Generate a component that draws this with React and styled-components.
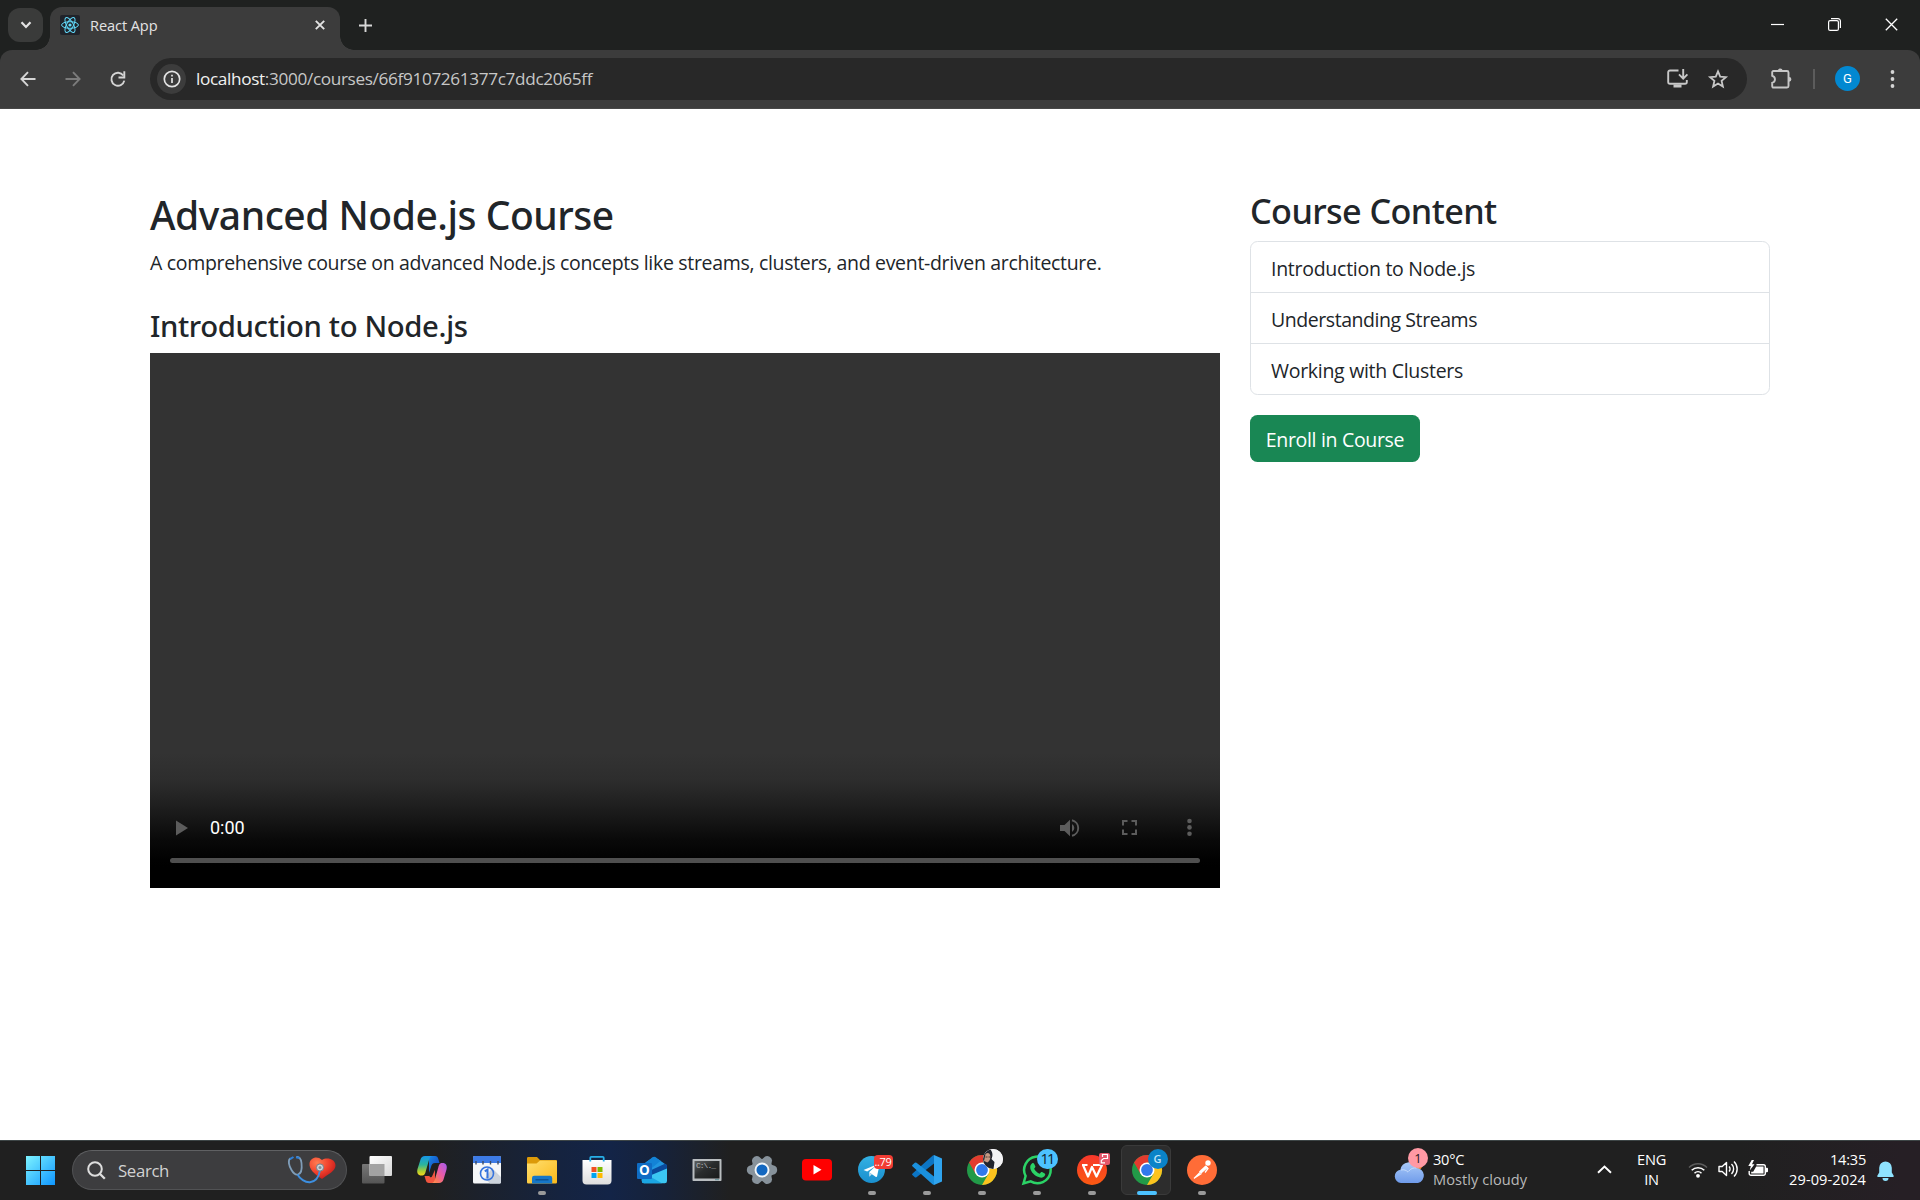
import React from "react";
import styled, { createGlobalStyle, css } from "styled-components";

const ui = `"Open Sans", "Noto Sans", sans-serif`;
const heading = `"Noto Sans", "Open Sans", sans-serif`;

const GlobalStyle = createGlobalStyle`
  *, *::before, *::after { box-sizing: border-box; }
  body { margin: 0; background: #fff; font-family: ${ui}; color: #212529; overflow: hidden; }
  h1, h2, h3, p, ul { margin: 0; padding: 0; }
  svg { display: block; flex: none; overflow: visible; }
`;

const Screen = styled.div`
  display: flex;
  flex-direction: column;
  width: 1920px;
  height: 1200px;
`;

/* ---------- browser chrome ---------- */

const Browser = styled.header`
  flex: none;
  height: 109px;
  background: #1f2120;
`;

const TabStrip = styled.div`
  display: flex;
  height: 50px;
  padding: 8px 22px 0 8px;
`;

const TabSearch = styled.div`
  display: flex;
  align-items: center;
  justify-content: center;
  width: 35px;
  height: 34px;
  border-radius: 12px;
  background: #3a3b3a;
`;

const Tab = styled.div`
  position: relative;
  display: flex;
  align-items: center;
  width: 290px;
  height: 43px;
  margin: -1px 0 0 7px;
  padding: 0 15px 7px 10px;
  border-radius: 12px 12px 0 0;
  background: #3c3c3c;

  &::before, &::after {
    content: "";
    position: absolute;
    bottom: 0;
    width: 14px;
    height: 14px;
  }
  &::before {
    left: -14px;
    background: radial-gradient(circle at 0 0, transparent 13.5px, #3c3c3c 14px);
  }
  &::after {
    right: -14px;
    background: radial-gradient(circle at 100% 0, transparent 13.5px, #3c3c3c 14px);
  }
`;

const Favicon = styled.div`
  display: flex;
  align-items: center;
  justify-content: center;
  width: 20px;
  height: 20px;
  margin-top: -1px;
  border-radius: 2px;
  background: #20232a;
`;

const TabTitle = styled.span`
  flex: 1;
  margin: 0 0 1px 10px;
  color: #e3e3e3;
  font-size: 14.6px;
  line-height: 20px;
  letter-spacing: -0.1px;
`;

const NewTab = styled.div`
  display: flex;
  width: 14px;
  height: 34px;
  margin-left: 19px;
  align-items: center;
`;

const WindowControls = styled.div`
  display: flex;
  gap: 44px;
  margin-left: auto;
  height: 33px;
  align-items: center;
`;

const Toolbar = styled.div`
  display: flex;
  align-items: center;
  height: 59px;
  padding: 0 20px 1px 20px;
  border-radius: 12px 12px 0 0;
  border-bottom: 1px solid #474747;
  background: #3c3c3c;
`;

const NavButtons = styled.div`
  display: flex;
  flex: none;
  gap: 29px;
  width: 130px;
`;

const Omnibox = styled.div`
  display: flex;
  flex: none;
  align-items: center;
  width: 1597px;
  height: 42px;
  padding: 0 19px 0 7px;
  border-radius: 21px;
  background: #282828;
`;

const SiteInfo = styled.div`
  display: flex;
  align-items: center;
  justify-content: center;
  width: 29px;
  height: 30px;
  border-radius: 50%;
  background: #3c3c3c;
`;

const Url = styled.div`
  flex: 1;
  margin: 1px 0 0 10px;
  color: #c7c7c7;
  font-size: 17.2px;
  line-height: 24px;
  letter-spacing: -0.35px;
`;

const Host = styled.span`
  color: #f1f1f1;
`;

const OmniboxActions = styled.div`
  display: flex;
  align-items: center;
  gap: 20px;
`;

const ToolbarEnd = styled.div`
  display: flex;
  align-items: center;
  margin-left: 24px;
`;

const Divider = styled.div`
  width: 2px;
  height: 20px;
  margin: 0 20px 0 21px;
  background: #5c5c5c;
`;

const Avatar = styled.div`
  display: flex;
  align-items: center;
  justify-content: center;
  width: 25px;
  height: 25px;
  margin-right: 30px;
  border-radius: 50%;
  background: #0288d1;
  color: #fff;
  font: 400 13px/25px Roboto, sans-serif;
`;

/* ---------- course page ---------- */

const Page = styled.main`
  display: flex;
  gap: 30px;
  flex: 1;
  padding: 80px 150px 0;
  align-items: flex-start;
`;

const Lesson = styled.section`
  width: 1070px;
`;

const headingBase = css`
  font-family: ${heading};
  font-weight: 500;
  white-space: nowrap;
`;

const CourseTitle = styled.h1`
  ${headingBase}
  height: 48px;
  margin-bottom: 10px;
  font-size: 39px;
  line-height: 51px;
  letter-spacing: -0.48px;
`;

const Description = styled.p`
  height: 30px;
  margin-bottom: 30px;
  font-size: 19.5px;
  line-height: 32px;
  letter-spacing: -0.315px;
  white-space: nowrap;
`;

const LessonTitle = styled.h3`
  ${headingBase}
  height: 36px;
  margin-bottom: 10px;
  font-size: 29.3px;
  line-height: 39px;
  letter-spacing: -0.37px;
`;

const Player = styled.div`
  display: flex;
  flex-direction: column;
  justify-content: flex-end;
  height: 535px;
  padding-bottom: 25px;
  background: linear-gradient(
    to bottom,
    #333 400px, #2d2d2d 427px, #222 447px, #161616 467px,
    #090909 487px, #010101 507px, #000 515px
  );
`;

const Controls = styled.div`
  display: flex;
  align-items: center;
  height: 60px;
  padding-right: 1px;
`;

const ControlButton = styled.div`
  display: flex;
  align-items: center;
  justify-content: center;
  width: 60px;
  height: 59px;
  margin-bottom: 1px;
  color: #5c5c5c;
`;

const Time = styled.span`
  flex: 1;
  color: #fff;
  font: 400 18px/24px Roboto, sans-serif;
`;

const Track = styled.div`
  height: 5px;
  margin: 0 20px;
  border-radius: 3px;
  background: #4f4f4f;
`;

const Sidebar = styled.aside`
  width: 520px;
`;

const SidebarTitle = styled.h2`
  ${headingBase}
  height: 42px;
  margin-bottom: 10px;
  font-size: 34.2px;
  line-height: 44px;
  letter-spacing: -0.6px;
`;

const LessonList = styled.ul`
  list-style: none;
  border: 1px solid #dee2e6;
  border-radius: 7.5px;
  margin-bottom: 20px;
`;

const LessonItem = styled.li`
  height: 51px;
  padding: 11px 20px 0;
  font-size: 19.5px;
  line-height: 31px;
  letter-spacing: ${(p) => p.$tracking}px;

  & + & {
    border-top: 1px solid #dee2e6;
  }
  &:first-child {
    height: 50px;
  }
`;

const EnrollButton = styled.button`
  display: block;
  width: 170px;
  height: 47px;
  padding: 2px 0 0;
  border: 0;
  border-radius: 7.5px;
  background: #198754;
  color: #fff;
  font: 400 19.5px/31px ${ui};
  letter-spacing: -0.32px;
`;

/* ---------- taskbar ---------- */

const Taskbar = styled.footer`
  display: flex;
  flex: none;
  height: 60px;
  border-top: 1px solid #3d4546;
  background: linear-gradient(
    to right,
    #202020 0, #202020 430px, #15233f 560px, #132447 610px,
    #172238 665px, #202020 730px, #202020 1740px, #261f25 1900px
  );
`;

const Start = styled.div`
  display: flex;
  align-items: center;
  padding: 0 17px 0 26px;
`;

const SearchBox = styled.div`
  display: flex;
  align-items: center;
  width: 275px;
  height: 40px;
  margin-top: 9px;
  padding: 0 10px 0 14px;
  border: 1px solid #515254;
  border-top-color: #606163;
  border-radius: 20px;
  background: #3d3d3f;
`;

const SearchLabel = styled.span`
  flex: 1;
  margin: 1px 0 0 12px;
  color: #d2d2d2;
  font-size: 16.8px;
  line-height: 24px;
  letter-spacing: -0.35px;
`;

const Apps = styled.div`
  display: flex;
  padding-left: 2px;
`;

const AppCell = styled.div`
  position: relative;
  display: flex;
  justify-content: center;
  width: 55px;
  height: 59px;
  padding-top: 14px;
`;

const ActiveTile = styled.div`
  position: absolute;
  inset: 4px 3px 5px 2px;
  border: 1px solid #3a3a3a;
  border-radius: 6px;
  background: #2d2d2d;
`;

const Glyph = styled.div`
  position: relative;
  width: 30px;
  height: 30px;
`;

const Indicator = styled.div`
  position: absolute;
  bottom: 5px;
  left: 50%;
  width: ${(p) => (p.$active ? 20 : 8)}px;
  height: 4px;
  margin-left: ${(p) => (p.$active ? -10 : -4)}px;
  border-radius: 2px;
  background: ${(p) => (p.$active ? "#4cc2ff" : "#9a9a9a")};
`;

const Badge = styled.span`
  position: absolute;
  top: ${(p) => p.$top}px;
  left: ${(p) => p.$left}px;
  width: ${(p) => p.$w}px;
  height: ${(p) => p.$h}px;
  border-radius: ${(p) => p.$r ?? p.$h / 2}px;
  background: ${(p) => p.$bg};
  color: ${(p) => p.$fg};
  font: ${(p) => p.$weight ?? 400} ${(p) => p.$size}px/${(p) => p.$h}px ${ui};
  letter-spacing: ${(p) => p.$tracking ?? 0}px;
  text-align: center;
`;

const Tray = styled.div`
  display: flex;
  margin-left: auto;
`;

const Weather = styled.div`
  display: flex;
  width: 203px;
`;

const WeatherIcon = styled.div`
  position: relative;
  width: 39px;
  padding-top: 16px;
`;

const Lines = styled.div`
  display: flex;
  flex-direction: column;
  padding-top: 8px;
  color: #fff;
  font-size: 14.6px;
  line-height: 20px;
  letter-spacing: ${(p) => p.$tracking ?? 0}px;
  text-align: ${(p) => p.$align ?? "left"};
  white-space: nowrap;
`;

const Muted = styled.span`
  color: #b9b9b9;
  letter-spacing: 0.04px;
`;

const Tight = styled.span`
  letter-spacing: -0.24px;
`;

const Chevron = styled.div`
  width: 40px;
  padding-top: 24px;
`;

const Language = styled.div`
  width: 51px;
  padding-right: 22px;
`;

const Status = styled.div`
  display: flex;
  gap: 10px;
  width: 101px;
  padding-top: 19px;
`;

const Clock = styled.div`
  width: 77px;
`;

const Bell = styled.div`
  width: 54px;
  padding: 20px 0 0 11px;
`;

/* ---------- icons ---------- */

const line = (color, width) => ({ fill: "none", stroke: color, strokeWidth: width });

const ChevronDown = () => (
  <svg width="12" height="8" viewBox="0 0 12 8"><path d="M1.500 1.200 6 6l4.500-4.800" {...line("#e3e3e3", 2.2)} /></svg>
);
const ReactMark = () => (
  <svg width="18" height="18" viewBox="-9 -9 18 18">
    <g {...line("#61dafb", 1)}>
      {[0, 60, 120].map((a) => <ellipse key={a} rx="8.4" ry="3.3" transform={`rotate(${a})`} />)}
    </g>
    <circle r="1.6" fill="#61dafb" />
  </svg>
);
const Cross = ({ size, width, color }) => (
  <svg width={size} height={size} viewBox={`0 0 ${size} ${size}`}>
    <path d={`M.8 .8 ${size - 0.8} ${size - 0.8}M${size - 0.8} .8 .8 ${size - 0.8}`} {...line(color, width)} />
  </svg>
);
const Plus = () => (
  <svg width="13" height="13" viewBox="0 0 13 13"><path d="M6.500 0v13M0 6.500h13" {...line("#d8d8d8", 1.9)} /></svg>
);
const Minimize = () => (
  <svg width="13" height="13" viewBox="0 0 13 13"><path d="M0 6.500h13" {...line("#fff", 1.2)} /></svg>
);
const Restore = () => (
  <svg width="13" height="13" viewBox="0 0 13 13">
    <rect x=".6" y="2.6" width="9.8" height="9.8" rx="1.5" {...line("#fff", 1.2)} />
    <path d="M3 .6h7a2.400 2.400 0 0 1 2.400 2.400v7" {...line("#fff", 1.2)} />
  </svg>
);
const Back = ({ color, flip }) => (
  <svg width="16" height="16" viewBox="0 0 16 16">
    <path transform={flip ? "matrix(-1 0 0 1 16 0)" : undefined} d="M15.500 8H1.700M8 1.200 1.400 8 8 14.800" {...line(color, 1.9)} />
  </svg>
);
const Reload = () => (
  <svg width="16" height="16" viewBox="0 0 16 16">
    <path d="M13.300 4.500A6.500 6.500 0 1 0 14.300 9.600" {...line("#d5d5d5", 1.9)} />
    <path d="M14.300.3v6.200H8.500" {...line("#d5d5d5", 1.9)} />
  </svg>
);
const Info = () => (
  <svg width="18" height="18" viewBox="0 0 18 18">
    <circle cx="9" cy="9" r="7.7" {...line("#e3e3e3", 1.7)} />
    <path d="M9 8v5M9 4.800v1.800" {...line("#e3e3e3", 1.7)} />
  </svg>
);
const Install = () => (
  <svg width="21" height="19" viewBox="0 0 21 19">
    <path d="M11.500 1.500H3A1.800 1.800 0 0 0 1.200 3.300v9.600A1.800 1.800 0 0 0 3 14.700h15a1.800 1.800 0 0 0 1.800-1.800V11" {...line("#c7c7c7", 1.9)} />
    <path d="M16.200 0v9M12 5.400l4.200 4.200 4.200-4.200" {...line("#c7c7c7", 1.9)} />
    <path d="M6.500 15.500h8v3h-8z" fill="#c7c7c7" />
  </svg>
);
const Star = () => (
  <svg width="20" height="20" viewBox="0 0 20 20">
    <path d="m10 2.400 2.200 5.300 5.700.5-4.300 3.700 1.300 5.600L10 14.500l-4.900 3 1.300-5.600L2.100 8.200l5.700-.5z" {...line("#c7c7c7", 1.8)} />
  </svg>
);
const Puzzle = () => (
  <svg width="21" height="21" viewBox="0 0 21 21">
    <path d="M2.500 3H16a1.500 1.500 0 0 1 1.500 1.500V18a1.500 1.500 0 0 1-1.500 1.500H2.500A1.200 1.200 0 0 1 1.200 18.300V14.800a3.600 3.600 0 0 0 0-7V4.300A1.200 1.200 0 0 1 2.500 3z" {...line("#c7c7c7", 1.9)} />
    <path d="M6.800 2.800a2.400 2.400 0 0 1 4.800 0zM18 8.900a2.400 2.400 0 0 1 0 4.800z" fill="#c7c7c7" />
  </svg>
);
const Dots = ({ color, r, step }) => (
  <svg width="5" height={step * 2 + 4} viewBox={`-2.500 ${-step - 2} 5 ${step * 2 + 4}`}>
    {[-step, 0, step].map((y) => <circle key={y} cy={y} r={r} fill={color} />)}
  </svg>
);
const Play = () => (
  <svg width="12" height="16" viewBox="0 0 12 16"><path d="M2 .5v15L14 8z" fill="currentColor" /></svg>
);
const Volume = () => (
  <svg width="19" height="18" viewBox="0 0 19 18">
    <path d="M0 6h4.500L10 .7v16.600L4.500 12H0zM12 5a4.600 4.600 0 0 1 0 8z" fill="currentColor" />
    <path d="M12 1.200a8 8 0 0 1 0 15.600" {...line("currentColor", 1.9)} />
  </svg>
);
const Fullscreen = () => (
  <svg width="15" height="15" viewBox="0 0 15 15">
    <path d="M1 5.500V1h4.500M9.500 1H14v4.500M14 9.500V14H9.500M5.500 14H1V9.500" {...line("currentColor", 2)} />
  </svg>
);

const WindowsLogo = () => (
  <svg width="29" height="29" viewBox="0 0 29 29">
    <defs><linearGradient id="win" x1="0" y1="0" x2="29" y2="29" gradientUnits="userSpaceOnUse">
      <stop stopColor="#7df3ff" /><stop offset="1" stopColor="#0f96ff" /></linearGradient></defs>
    <path d="M0 0h14v14H0zM15 0h14v14H15zM0 15h14v14H0zM15 15h14v14H15z" fill="url(#win)" />
  </svg>
);
const SearchGlyph = () => (
  <svg width="19" height="19" viewBox="0 0 19 19">
    <circle cx="8" cy="8" r="6.8" {...line("#dedede", 2)} /><path d="m12.800 12.800 5 5" {...line("#dedede", 2.3)} />
  </svg>
);
const Stethoscope = () => (
  <svg width="48" height="28" viewBox="0 0 48 28">
    <defs><radialGradient id="heart" cx=".3" cy=".25" r=".9">
      <stop stopColor="#ff7d52" /><stop offset=".5" stopColor="#f0402c" /><stop offset="1" stopColor="#b71218" /></radialGradient></defs>
    <path d="M34 23C26 18 21 13 21.500 7.500 22 2 29-1 34 4c5-3 13-1 13.500 5C48 15 40 18 34 23z" fill="url(#heart)" />
    <path d="M2.500 2.200C-.5 4 1 10 3.500 14c2 3.500 4.500 5 6.500 4.500 3.500-1 4-7 3.500-11.500C13 2.500 11 .5 8.500 1" {...line("#7f9db8", 1.8)} />
    <path d="M9.500 18.500C12 23 17 26.500 22 26.200c6-.4 9-6 10-12" {...line("#3d8fe0", 1.9)} />
    <path d="M2 3.200 5.500 1M8 1.200 11.500 2" {...line("#2d7fd8", 2)} />
    <circle cx="32" cy="11.5" r="3.6" fill="#ccd3d8" stroke="#75808a" /><circle cx="32" cy="11.5" r="1.5" fill="#858f97" />
  </svg>
);
const TaskView = () => (
  <svg width="30" height="30" viewBox="0 0 30 30">
    <defs><linearGradient id="tv" x1="0" y1="0" x2="1" y2="1"><stop stopColor="#fff" /><stop offset="1" stopColor="#d8d8d8" /></linearGradient>
      <linearGradient id="tv2" x1="0" y1="0" x2="0" y2="1"><stop stopColor="#777" /><stop offset="1" stopColor="#555" /></linearGradient></defs>
    <rect x="0" y="9" width="22.5" height="19.5" rx="1" fill="url(#tv2)" />
    <rect x="7.5" y="1" width="22.5" height="20" rx="1" fill="url(#tv)" />
    <path d="M7.500 9h15v12h-15z" fill="#a3a3a3" />
  </svg>
);
const Copilot = () => (
  <svg width="30" height="30" viewBox="0 0 30 30">
    <defs>
      <linearGradient id="cpA" x1="0" y1="0" x2="0" y2="1"><stop stopColor="#1696e8" /><stop offset=".45" stopColor="#2bb59c" /><stop offset=".8" stopColor="#b6cf2e" /><stop offset="1" stopColor="#f5d51e" /></linearGradient>
      <linearGradient id="cpB" x1="1" y1="0" x2="0" y2="1"><stop stopColor="#a35bf0" /><stop offset=".45" stopColor="#e85ba8" /><stop offset=".8" stopColor="#fb7a55" /><stop offset="1" stopColor="#fba35a" /></linearGradient>
      <linearGradient id="cpC" x1="0" y1="0" x2="1" y2="1"><stop stopColor="#1a86e6" /><stop offset="1" stopColor="#1039b8" /></linearGradient>
    </defs>
    <path d="M12 1h6c2 0 2.800 1.200 3.300 3L22.500 8H18c-2.500 0-3.200 1.500-4 4L12 18z" fill="url(#cpC)" />
    <path d="M18 28h-6c-2 0-2.800-1.200-3.300-3L7.500 21H12c2.500 0 3.200-1.500 4-4l2-6z" fill="#f0553f" />
    <path d="M8 1h7.500c-2 0-2.800 1.600-3.500 4l-3.300 11.500C8 19 7.500 20.500 4.500 20.500 1 20.500-.5 18 .5 14L3.500 4.500C4.200 2.200 5.500 1 8 1z" fill="url(#cpA)" />
    <path d="M22 28h-7.500c2 0 2.800-1.600 3.500-4l3.300-11.500C22 10 22.500 8 25.500 8c3.500 0 5 2.500 4 6.500l-3 10C25.800 26.800 24.500 28 22 28z" fill="url(#cpB)" />
    <path d="M18.500 10.500 13.800 21" stroke="#202020" strokeWidth="2.6" strokeLinecap="round" />
  </svg>
);
const CalendarApp = () => (
  <svg width="30" height="30" viewBox="0 0 30 30">
    <rect x="1" y="1" width="28" height="27.5" rx="1.5" fill="#f4f6f8" />
    <path d="M20 13 28.900 22v5.500a1.300 1.300 0 0 1-1.300 1H18l-5-5z" fill="#ccd3dc" />
    <path d="M1 8V2.500A1.500 1.500 0 0 1 2.500 1h25A1.500 1.500 0 0 1 29 2.500V8z" fill="#3d7be6" />
    {[4, 11, 18.5, 26].map((x) => <path key={x} d={`M${x} 6v3.500`} stroke="#3c4a60" strokeWidth="1.4" />)}
    <circle cx="15" cy="18.5" r="6.5" {...line("#3573dd", 1.6)} />
    <path d="M12.800 16.300 15.500 14.500V23.500" {...line("#3573dd", 2)} />
  </svg>
);
const Explorer = () => (
  <svg width="30" height="30" viewBox="0 0 30 30">
    <defs><linearGradient id="fold" x1="0" y1="0" x2="1" y2="1"><stop stopColor="#ffdf70" /><stop offset="1" stopColor="#fbb919" /></linearGradient></defs>
    <path d="M0 3.300A1.300 1.300 0 0 1 1.300 2H10l3 3H28.500A1.300 1.300 0 0 1 30 6.300V14H0z" fill="#dc9a09" />
    <path d="M0 8.500h9.500L13 5.500H29a1 1 0 0 1 1 1V27.300a1.200 1.200 0 0 1-1.200 1.200H1.200A1.200 1.200 0 0 1 0 27.300z" fill="url(#fold)" />
    <path d="M5 28.500V23a2.200 2.200 0 0 1 2.200-2.200H23A2.200 2.200 0 0 1 25.200 23v5.500z" fill="#1677c8" />
    <path d="M8.500 24.800h13" stroke="#0b4f91" strokeWidth="1.3" />
  </svg>
);
const Store = () => (
  <svg width="30" height="30" viewBox="0 0 30 30">
    <defs><linearGradient id="st" x1="0" y1="0" x2="0" y2="1"><stop stopColor="#fff" /><stop offset="1" stopColor="#dedede" /></linearGradient></defs>
    <path d="M.500 5h29v20.500a4 4 0 0 1-4 4h-21a4 4 0 0 1-4-4z" fill="url(#st)" />
    <path d="M8.300 6.500V2.800A1 1 0 0 1 9.300 1.800H20.700a1 1 0 0 1 1 1V6.500" {...line("#27afe8", 1.8)} />
    <path d="M9.500 12h5v5h-5z" fill="#f25022" /><path d="M15.500 12h5v5h-5z" fill="#7fba00" />
    <path d="M9.500 18h5v5h-5z" fill="#00a4ef" /><path d="M15.500 18h5v5h-5z" fill="#ffb900" />
  </svg>
);
const OutlookLetter = styled.span`
  position: absolute;
  left: 0;
  top: 8px;
  width: 15.5px;
  height: 15.5px;
  border-radius: 1px;
  background: #0f6cc4;
  color: #fff;
  font: 700 13.5px/15px ${ui};
  text-align: center;
`;
const Outlook = () => (
  <>
    <svg width="30" height="30" viewBox="0 0 30 30">
      <path d="M5 10 16 2.200a2 2 0 0 1 2.200 0L29.500 10v5l-10 8-14.500-5z" fill="#2196e0" />
      <path d="M9 7.200 16 2.200a2 2 0 0 1 2.200 0l5.500 3.600L11 16z" fill="#1383d6" />
      <path d="M28 8.800 30 10v4L14 22l-4-5z" fill="#0a4a9c" />
      <path d="M30 13.500V26a2.300 2.300 0 0 1-2.300 2.300H7A2.300 2.300 0 0 1 4.800 26V24z" fill="#3bc7f3" />
      <path d="M4.800 22h9L25 28.300H7A2.300 2.300 0 0 1 4.800 26z" fill="#1ba6e4" />
    </svg>
    <OutlookLetter>O</OutlookLetter>
  </>
);
const Prompt = styled.span`
  position: absolute;
  left: 4.5px;
  top: 5px;
  color: #b7b7b7;
  font: 400 8px/12px "Liberation Mono", monospace;
  letter-spacing: -1px;
`;
const Terminal = () => (
  <>
    <svg width="30" height="30" viewBox="0 0 30 30">
      <defs><linearGradient id="cmd" x1="0" y1="0" x2="1" y2="1"><stop stopColor="#5c5f60" /><stop offset=".45" stopColor="#2a2c2d" /><stop offset="1" stopColor="#191a1a" /></linearGradient></defs>
      <rect x=".5" y="4" width="29" height="22" rx=".8" fill="#b9bdc0" />
      <rect x="2.5" y="6" width="25" height="17.5" fill="url(#cmd)" />
      <path d="M23 24.700h4" stroke="#5d8e95" />
    </svg>
    <Prompt>C:\._</Prompt>
  </>
);
const Settings = () => (
  <svg width="30" height="30" viewBox="-15 -15 30 30">
    <defs><linearGradient id="gear" x1="0" y1="-15" x2="0" y2="15" gradientUnits="userSpaceOnUse"><stop stopColor="#9aa5ae" /><stop offset="1" stopColor="#707c86" /></linearGradient></defs>
    <circle r="11" fill="url(#gear)" />
    {[0, 60, 120, 180, 240, 300].map((a) => (
      <path key={a} transform={`rotate(${a})`} d="M6-6.500 13.200-4Q15.200-2.800 15.200 0T13.200 4L6 6.500z" fill="#87929b" />
    ))}
    <circle r="6.5" fill="#1267c0" stroke="#f3f7fa" strokeWidth="1.9" />
  </svg>
);
const YouTube = () => (
  <svg width="30" height="30" viewBox="0 0 30 30">
    <rect x="0" y="4" width="30" height="21.5" rx="4" fill="#f00" /><path d="M11.500 10v9.500l8-4.700z" fill="#fff" />
  </svg>
);
const Telegram = () => (
  <svg width="30" height="30" viewBox="0 0 30 30">
    <defs><linearGradient id="tg" x1="0" y1="0" x2="0" y2="1"><stop stopColor="#33b1e3" /><stop offset="1" stopColor="#1a8fce" /></linearGradient></defs>
    <circle cx="14.5" cy="14.5" r="13.5" fill="url(#tg)" />
    <path d="m6.500 15 15-6.200c.8-.3 1.200 0 1 .9l-2.400 11.500c-.2.800-.8 1-1.500.5l-6.600-4.400 6.500-6-8.300 5.300z" fill="#fff" />
    <path d="m12 17.300.3 4.500 2.600-2.600z" fill="#c3dced" />
  </svg>
);
const VSCode = () => (
  <svg width="30" height="30" viewBox="0 0 30 30">
    <path d="M22 0v8.500L4.500 22.200a1.500 1.500 0 0 1-1.700 0L.6 20.300a1.200 1.200 0 0 1 0-1.900L20.500.8z" fill="#0c75c4" />
    <path d="M22 30v-8.500L4.500 7.800a1.500 1.500 0 0 0-1.700 0L.6 9.700a1.200 1.200 0 0 0 0 1.900l19.900 17.600z" fill="#1a90dd" />
    <path d="M22 0 30 3.500v23L22 30z" fill="#2fa4ef" />
  </svg>
);
const Chrome = () => (
  <svg width="30" height="30" viewBox="-15 -15 30 30">
    <circle r="15" fill="#229a48" />
    <path d="M0-7.500H13A15 15 0 0 1 0 15L6.500 3.750z" fill="#fcc31e" />
    <path d="M-6.500 3.750-13-7.500A15 15 0 0 1 13-7.500H0z" fill="#e33b2e" />
    <circle r="7.5" fill="#fff" /><circle r="5.9" fill="#3079ec" />
  </svg>
);
const ProfilePhoto = () => (
  <svg width="20" height="20" viewBox="0 0 20 20">
    <defs><clipPath id="pc"><circle cx="10" cy="10" r="10" /></clipPath></defs>
    <g clipPath="url(#pc)">
      <path d="M0 0h20v20H0z" fill="#f3f3f5" />
      <path d="M0 0h7c3 3 3 7 1.500 10l3 3-1 7H0z" fill="#22252e" />
      <path d="M2.500 5C5 3 7 4.500 7.300 7c.3 3-1 5.500-3 6.500L1 12z" fill="#c59a84" />
      <path d="M2.500 8h2M5.500 8H7" stroke="#33261f" strokeWidth=".8" />
    </g>
  </svg>
);
const WhatsApp = () => (
  <svg width="30" height="30" viewBox="0 0 30 30">
    <path d="M1.500 28.500 3.600 21A13.300 13.300 0 1 1 8.700 26.400z" {...line("#2bd366", 2.5)} />
    <path d="M10.200 8.200c.8-.5 1.500-.3 1.900.5l1.200 2.600c.3.700-.2 1.300-1.200 2.400 1.500 2.600 3.200 4 5.600 5 1.200-1.600 1.600-2 2.400-1.600l2.600 1.300c.7.400.7 1.300.2 2.200-1.300 2.200-3.600 2.500-6.200 1.500-4.200-1.500-7.700-5.200-8.400-8.700-.4-2.200.4-4.300 1.900-5.200z" fill="#2bd366" />
  </svg>
);
const Wps = () => (
  <svg width="30" height="30" viewBox="0 0 30 30">
    <defs><linearGradient id="wps" x1="0" y1="0" x2="0" y2="1"><stop stopColor="#f7372b" /><stop offset="1" stopColor="#fb5a12" /></linearGradient></defs>
    <circle cx="15" cy="15" r="15" fill="url(#wps)" />
    <path d="M5 10h5.500M6 10l5 11.500L15 12l4.500 9.500L25 10H16" {...line("#fff", 2.2)} strokeLinejoin="round" />
  </svg>
);
const WpsBadge = () => (
  <svg width="11" height="11" viewBox="0 0 11 11">
    <path d="M3.500 4V1.500h5v4H4.500L2.300 7.500V9.800H6" {...line("#fff", 1.2)} />
  </svg>
);
const Postman = () => (
  <svg width="30" height="30" viewBox="0 0 30 30">
    <circle cx="15" cy="15" r="15" fill="#ff6c37" />
    <circle cx="21" cy="8" r="2.7" fill="#fff" />
    <path d="m12 16.500 6.500-6 2.500 2.300-7 6z" fill="#fff" />
    <path d="m13 17.500-6 6M14.500 18.500 7.500 23M18.500 11l2.500 2.500-3 4" {...line("#fff", 1.3)} />
  </svg>
);
const Cloud = () => (
  <svg width="31" height="27" viewBox="0 0 31 27">
    <defs><linearGradient id="cl" x1="0" y1="0" x2="0" y2="1"><stop stopColor="#a9caf8" /><stop offset="1" stopColor="#6f9bea" /></linearGradient></defs>
    <circle cx="22.5" cy="7" r="6.5" fill="#f58220" />
    <path d="M7 26a6.700 6.700 0 0 1-.6-13.300A8.300 8.300 0 0 1 22.500 11 7.600 7.600 0 0 1 24 26z" fill="url(#cl)" />
    <path d="M7 13c3-.8 5.500.3 7 2.200M14.500 14.500c2-3 5-4 8-3.500" {...line("#c5dcfb", 1)} />
  </svg>
);
const ChevronUp = () => (
  <svg width="15" height="9" viewBox="0 0 15 9"><path d="M1 7.800 7.500 1.500 14 7.800" {...line("#fff", 1.9)} /></svg>
);
const Wifi = () => (
  <svg width="20" height="18" viewBox="0 0 20 18">
    <path d="M1 7.500a12.600 12.600 0 0 1 18 0" {...line("#5d5d5d", 1.5)} />
    <path d="M3.700 10.300a8.900 8.900 0 0 1 12.600 0M6.500 13.200a5 5 0 0 1 7 0" {...line("#fff", 1.6)} />
    <circle cx="10" cy="15.8" r="1.9" fill="#fff" />
  </svg>
);
const Speaker = () => (
  <svg width="20" height="18" viewBox="0 0 20 18">
    <path d="M1 6.500h3.200L8.500 2.500v13L4.200 11.500H1z" {...line("#fff", 1.4)} strokeLinejoin="round" />
    <path d="M11 6.500a3.500 3.500 0 0 1 0 5M13.500 4a7 7 0 0 1 0 10M16 1.500a10.500 10.500 0 0 1 0 15" {...line("#fff", 1.4)} />
  </svg>
);
const Battery = () => (
  <svg width="20" height="18" viewBox="0 0 20 18">
    <path d="M8.500 4.700h7A1.800 1.800 0 0 1 17.300 6.500v7a1.800 1.800 0 0 1-1.800 1.800H3A1.800 1.800 0 0 1 1.200 13.500V11" {...line("#fff", 1.4)} />
    <path d="M8.200 6.500h7.300v7H3.200V11.800h2zM18 7.800h1a1 1 0 0 1 1 1v2.500a1 1 0 0 1-1 1h-1z" fill="#fff" />
    <path d="M3.700 0 .3 6h2.500L1.700 10.500 6.500 4.300H4L6 0z" fill="#fff" />
  </svg>
);
const BellGlyph = () => (
  <svg width="17" height="20" viewBox="0 0 17 20">
    <path d="M8.500.5A6.300 6.300 0 0 1 14.800 6.800v4.700l1.900 3.300a.8.800 0 0 1-.7 1.200H1a.8.800 0 0 1-.7-1.200l1.900-3.300V6.800A6.300 6.300 0 0 1 8.500.5zM5.500 17h6a3 3 0 0 1-6 0z" fill="#8fe3ff" />
  </svg>
);

/* ---------- data ---------- */

const lessons = [
  { title: "Introduction to Node.js", tracking: -0.27 },
  { title: "Understanding Streams", tracking: -0.44 },
  { title: "Working with Clusters", tracking: -0.29 },
];

const apps = [
  { id: "taskview", icon: <TaskView /> },
  { id: "copilot", icon: <Copilot /> },
  { id: "calendar", icon: <CalendarApp /> },
  { id: "explorer", icon: <Explorer />, open: true },
  { id: "store", icon: <Store /> },
  { id: "outlook", icon: <Outlook /> },
  { id: "terminal", icon: <Terminal /> },
  { id: "settings", icon: <Settings /> },
  { id: "youtube", icon: <YouTube /> },
  {
    id: "telegram", icon: <Telegram />, open: true,
    badge: <Badge $top={0} $left={17} $w={19} $h={14} $r={4} $bg="#f23c34" $fg="#fff" $size={11} $tracking={-0.4}>..79</Badge>,
  },
  { id: "vscode", icon: <VSCode />, open: true },
  {
    id: "chrome-profile", icon: <Chrome />, open: true,
    badge: <Badge $top={-6} $left={16} $w={20} $h={20} $bg="#fff" $fg="#000" $size={10}><ProfilePhoto /></Badge>,
  },
  {
    id: "whatsapp", icon: <WhatsApp />, open: true,
    badge: <Badge $top={-6} $left={15} $w={21} $h={20} $bg="#4cc2ff" $fg="#10202a" $size={14.5} $tracking={-1.8}>11</Badge>,
  },
  {
    id: "wps", icon: <Wps />, open: true,
    badge: <Badge $top={-2} $left={22} $w={11} $h={12} $r={2} $bg="#e5566a" $fg="#fff" $size={9}><WpsBadge /></Badge>,
  },
  {
    id: "chrome", icon: <Chrome />, open: true, active: true,
    badge: <Badge $top={-6} $left={16} $w={20} $h={20} $bg="#0a83c8" $fg="#bfe2f7" $size={11} $weight={600}>G</Badge>,
  },
  { id: "postman", icon: <Postman />, open: true },
];

function BrowserBar() {
  return (
    <Browser>
      <TabStrip>
        <TabSearch><ChevronDown /></TabSearch>
        <Tab>
          <Favicon><ReactMark /></Favicon>
          <TabTitle>React App</TabTitle>
          <Cross size={10} width={1.9} color="#e3e3e3" />
        </Tab>
        <NewTab><Plus /></NewTab>
        <WindowControls>
          <Minimize />
          <Restore />
          <Cross size={13} width={1.3} color="#fff" />
        </WindowControls>
      </TabStrip>
      <Toolbar>
        <NavButtons>
          <Back color="#d5d5d5" />
          <Back color="#7b7b7b" flip />
          <Reload />
        </NavButtons>
        <Omnibox>
          <SiteInfo><Info /></SiteInfo>
          <Url><Host>localhost</Host>:3000/courses/66f9107261377c7ddc2065ff</Url>
          <OmniboxActions><Install /><Star /></OmniboxActions>
        </Omnibox>
        <ToolbarEnd>
          <Puzzle />
          <Divider />
          <Avatar>G</Avatar>
          <Dots color="#d5d5d5" r={1.9} step={7} />
        </ToolbarEnd>
      </Toolbar>
    </Browser>
  );
}

export default function App() {
  return (
    <Screen>
      <GlobalStyle />
      <BrowserBar />
      <Page>
        <Lesson>
          <CourseTitle>Advanced Node.js Course</CourseTitle>
          <Description>
            A comprehensive course on advanced Node.js concepts like streams, clusters, and event-driven architecture.
          </Description>
          <LessonTitle>Introduction to Node.js</LessonTitle>
          <Player>
            <Controls>
              <ControlButton><Play /></ControlButton>
              <Time>0:00</Time>
              <ControlButton><Volume /></ControlButton>
              <ControlButton><Fullscreen /></ControlButton>
              <ControlButton><Dots color="currentColor" r={2.3} step={6.4} /></ControlButton>
            </Controls>
            <Track />
          </Player>
        </Lesson>
        <Sidebar>
          <SidebarTitle>Course Content</SidebarTitle>
          <LessonList>
            {lessons.map((l) => <LessonItem key={l.title} $tracking={l.tracking}>{l.title}</LessonItem>)}
          </LessonList>
          <EnrollButton>Enroll in Course</EnrollButton>
        </Sidebar>
      </Page>
      <Taskbar>
        <Start><WindowsLogo /></Start>
        <SearchBox>
          <SearchGlyph />
          <SearchLabel>Search</SearchLabel>
          <Stethoscope />
        </SearchBox>
        <Apps>
          {apps.map((a) => (
            <AppCell key={a.id}>
              {a.active && <ActiveTile />}
              <Glyph>{a.icon}{a.badge}</Glyph>
              {a.open && <Indicator $active={a.active} />}
            </AppCell>
          ))}
        </Apps>
        <Tray>
          <Weather>
            <WeatherIcon>
              <Cloud />
              <Badge $top={7} $left={14} $w={20} $h={20} $bg="#ff99a4" $fg="#2a1a1c" $size={13}>1</Badge>
            </WeatherIcon>
            <Lines><Tight>30°C</Tight><Muted>Mostly cloudy</Muted></Lines>
          </Weather>
          <Chevron><ChevronUp /></Chevron>
          <Language><Lines $align="center" $tracking={-0.2}><span>ENG</span><span>IN</span></Lines></Language>
          <Status><Wifi /><Speaker /><Battery /></Status>
          <Clock><Lines $align="right" $tracking={0.08}><Tight>14:35</Tight><span>29-09-2024</span></Lines></Clock>
          <Bell><BellGlyph /></Bell>
        </Tray>
      </Taskbar>
    </Screen>
  );
}
